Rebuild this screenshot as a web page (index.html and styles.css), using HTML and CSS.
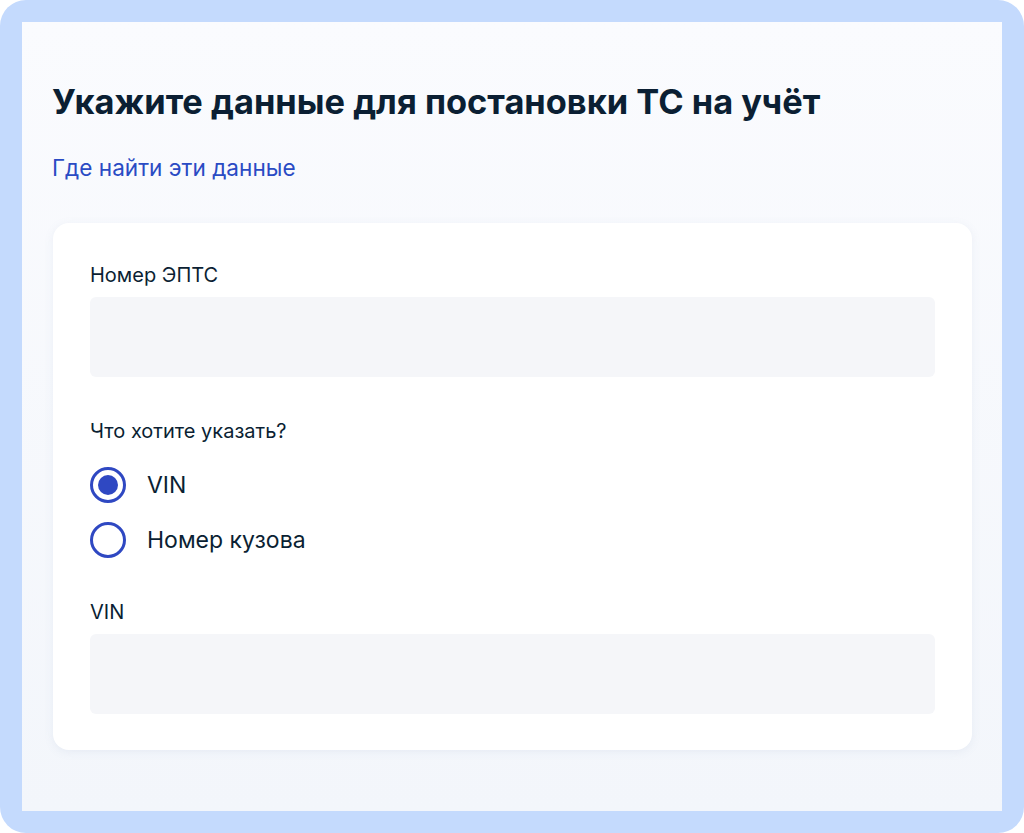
FILE: index.html
```html
<!DOCTYPE html>
<html lang="ru">
<head>
<meta charset="utf-8">
<link rel="stylesheet" href="styles.css">
</head>
<body>
<div class="frame">
  <div class="screen">
    <h1 class="title">Укажите данные для постановки ТС на учёт</h1>
    <a class="link" href="#">Где найти эти данные</a>
    <div class="card">
      <div class="field">
        <div class="label">Номер ЭПТС</div>
        <div class="input"></div>
      </div>
      <div class="group">
        <div class="label">Что хотите указать?</div>
        <div class="radios">
          <div class="radio checked"><span class="dot"></span><span class="rtext">VIN</span></div>
          <div class="radio"><span class="dot"></span><span class="rtext">Номер кузова</span></div>
        </div>
      </div>
      <div class="field">
        <div class="label">VIN</div>
        <div class="input"></div>
      </div>
    </div>
  </div>
</div>
</body>
</html>
```
FILE: styles.css
```css
* { box-sizing: border-box; }
html, body { margin: 0; padding: 0; }
body {
  width: 1024px;
  height: 833px;
  background: #ffffff;
  font-family: Inter, "Noto Sans", sans-serif;
  color: #0b1f33;
}
.frame {
  width: 1024px;
  height: 833px;
  background: #c4dafd;
  border-radius: 26px;
  padding: 22px;
}
.screen {
  width: 980px;
  height: 789px;
  background: linear-gradient(180deg, #fafbfe 0%, #f3f6fb 100%);
  padding: 58px 30px 0 30px;
  display: flex;
  flex-direction: column;
  align-items: flex-start;
}
.title {
  margin: 0;
  font-size: 34.4px;
  font-weight: 700;
  line-height: 44px;
  color: #0b1f33;
}
.link {
  margin-top: 30px;
  font-size: 22.6px;
  line-height: 28px;
  color: #2a4bc4;
  text-decoration: none;
}
.card {
  margin-top: 41px;
  margin-left: 1px;
  width: 919px;
  background: #ffffff;
  border-radius: 16px;
  box-shadow: 0 2px 10px rgba(120, 140, 180, 0.10);
  padding: 38px 37px 36px 37px;
  display: flex;
  flex-direction: column;
  gap: 40px;
}
.label {
  font-size: 20px;
  line-height: 28px;
  color: #0b1f33;
}
.input {
  margin-top: 8px;
  height: 80px;
  background: #f5f6f9;
  border-radius: 6px;
}
.radios {
  margin-top: 22px;
  display: flex;
  flex-direction: column;
  gap: 19px;
}
.radio {
  display: flex;
  align-items: center;
  gap: 21px;
  height: 36px;
}
.dot {
  width: 36px;
  height: 36px;
  border-radius: 50%;
  border: 3px solid #2f48c2;
  background: #fff;
  position: relative;
  flex: none;
}
.radio.checked .dot::after {
  content: "";
  position: absolute;
  left: 50%;
  top: 50%;
  width: 20px;
  height: 20px;
  margin: -10px 0 0 -10px;
  border-radius: 50%;
  background: #2f48c2;
}
.rtext {
  font-size: 23px;
  line-height: 30px;
  color: #0b1f33;
}
```
